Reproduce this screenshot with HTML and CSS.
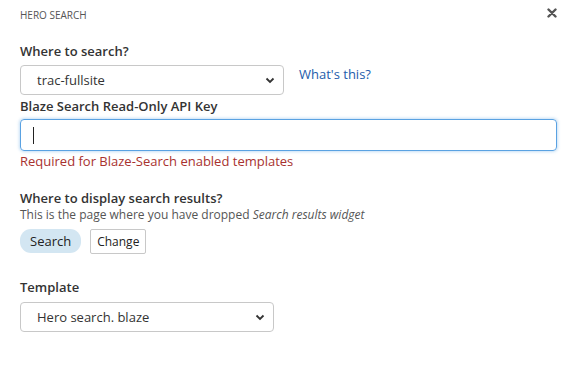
FILE: index.html
```html
<!DOCTYPE html>
<html lang="en">
<head>
  <meta charset="UTF-8">
  <title>Hero Search</title>
  <link rel="stylesheet" href="styles.css">
</head>
<body>

  <div class="panel">
    <header class="panel-head">
      <span class="panel-title">HERO SEARCH</span>
      <button class="close-btn" aria-label="Close">
        <svg width="10" height="10" viewBox="0 0 10 10">
          <path d="M1.5 1.5 L8.5 8.5 M8.5 1.5 L1.5 8.5" stroke="#555" stroke-width="2.4" stroke-linecap="round"/>
        </svg>
      </button>
    </header>

    <div class="field first">
      <label class="field-label">Where to search?</label>
      <div class="row search-row">
        <div class="select wide">
          <span>trac-fullsite</span>
          <svg class="chevron" width="10" height="7" viewBox="0 0 10 7"><path d="M1.5 1.5 L5 5 L8.5 1.5" fill="none" stroke="#333" stroke-width="1.8"/></svg>
        </div>
        <a class="help-link" href="#">What's this?</a>
      </div>
    </div>

    <div class="field api-key">
      <label class="field-label">Blaze Search Read-Only API Key</label>
      <div class="text-input"><span class="caret"></span></div>
      <p class="error">Required for Blaze-Search enabled templates</p>
    </div>

    <div class="field results">
      <label class="field-label">Where to display search results?</label>
      <p class="hint">This is the page where you have dropped <em>Search results widget</em></p>
      <div class="row buttons">
        <span class="pill">Search</span>
        <button class="change-btn">Change</button>
      </div>
    </div>

    <div class="field template">
      <label class="field-label">Template</label>
      <div class="select narrow">
        <span>Hero search. blaze</span>
        <svg class="chevron" width="10" height="7" viewBox="0 0 10 7"><path d="M1.5 1.5 L5 5 L8.5 1.5" fill="none" stroke="#333" stroke-width="1.8"/></svg>
      </div>
    </div>
  </div>

</body>
</html>
```

FILE: styles.css
```css
body {
  margin: 0;
  background-color: #fff;
  font-family: 'Open Sans', sans-serif;
  color: #333;
}

.panel {
  padding: 6px 16px 0 20px;
}

.panel-head {
  display: flex;
  justify-content: space-between;
  align-items: center;
  height: 16px;
}

.panel-title {
  font-size: 10px;
  color: #555;
  padding-top: 1px;
}

.close-btn {
  background: none;
  border: none;
  padding: 0;
  margin-top: -3px;
  line-height: 0;
  cursor: pointer;
}

.field-label {
  display: block;
  font-size: 13px;
  font-weight: 600;
  color: #333;
  line-height: 18px;
}

.row {
  display: flex;
  align-items: center;
}

/* where to search */
.first {
  margin-top: 20px;
}

.search-row {
  margin-top: 5px;
}

.select {
  box-sizing: border-box;
  display: flex;
  justify-content: space-between;
  align-items: center;
  height: 30px;
  padding: 0 8px 0 16px;
  border: 1px solid #c8c8c8;
  border-radius: 4px;
  font-size: 13px;
  color: #333;
}

.select.wide {
  width: 264px;
}

.select.narrow {
  width: 254px;
  margin-top: 6px;
}

.help-link {
  margin-left: 15px;
  margin-top: -12px;
  font-size: 13px;
  color: #1d5cab;
  text-decoration: none;
}

/* api key */
.api-key {
  margin-top: 2px;
}

.text-input {
  box-sizing: border-box;
  height: 32px;
  margin-top: 4px;
  border: 1.5px solid #5aa2e2;
  border-radius: 4px;
  box-shadow: 0 0 3px 1px rgba(90, 162, 226, 0.35);
  padding: 0 12px;
  display: flex;
  align-items: center;
}

.caret {
  width: 1px;
  height: 17px;
  background-color: #222;
}

.error {
  margin: 1px 0 0 0;
  font-size: 13px;
  color: #a8322f;
}

/* results page */
.results {
  margin-top: 19px;
}

.hint {
  margin: 0;
  font-size: 12px;
  color: #555;
  line-height: 16px;
}

.buttons {
  margin-top: 4px;
  gap: 9px;
}

.pill {
  display: inline-block;
  background-color: #d3e6f2;
  border-radius: 11px;
  padding: 3px 10px;
  font-size: 13px;
  color: #222;
}

.change-btn {
  font-family: 'Open Sans', sans-serif;
  font-size: 12px;
  background: #fff;
  border: 1px solid #c8c8c8;
  border-radius: 2px;
  padding: 3px 6px;
  color: #222;
  margin-top: 2px;
}

/* template */
.template {
  margin-top: 24px;
}
```
